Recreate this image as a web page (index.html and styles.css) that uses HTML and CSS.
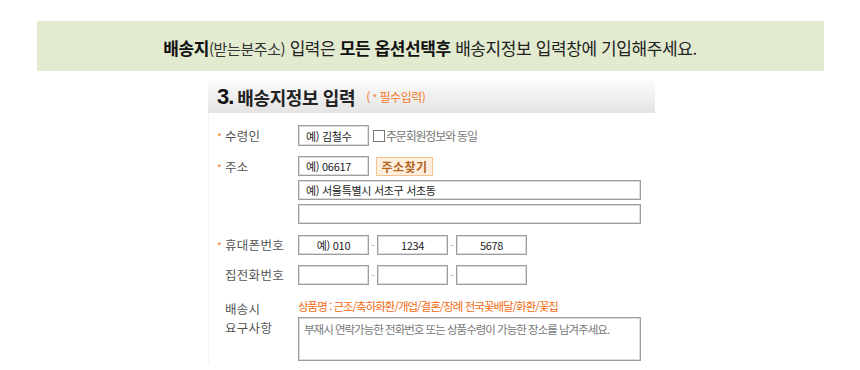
FILE: index.html
```html
<!DOCTYPE html>
<html lang="ko">
<head>
  <meta charset="UTF-8" />
  <title>배송지정보 입력</title>
  <link rel="stylesheet" href="styles.css">
</head>
<body>
  <div class="notice">
    <p><b>배송지</b><span class="small">(받는분주소)</span> 입력은 <b>모든 옵션선택후</b> 배송지정보 입력창에 기입해주세요.</p>
  </div>

  <div class="form">
    <div class="form-head">
      <span class="num">3.</span>
      <span class="title">배송지정보 입력</span>
      <span class="req">( <i>*</i> 필수입력)</span>
    </div>

    <div class="form-body">
      <div class="row r-name">
        <div class="label"><span class="star">*</span>수령인</div>
        <div class="field">
          <input type="text" class="box w71" value="예) 김철수" />
          <label class="same"><span class="check"></span>주문회원정보와 동일</label>
        </div>
      </div>

      <div class="row r-addr">
        <div class="label"><span class="star">*</span>주소</div>
        <div class="field col">
          <div class="line">
            <input type="text" class="box w71" value="예) 06617" />
            <button class="find">주소찾기</button>
          </div>
          <input type="text" class="box wide" value="예) 서울특별시 서초구 서초동" />
          <input type="text" class="box wide" value="" />
        </div>
      </div>

      <div class="row r-mobile">
        <div class="label"><span class="star">*</span>휴대폰번호</div>
        <div class="field">
          <input type="text" class="box tel" value="예) 010" />
          <span class="dash">-</span>
          <input type="text" class="box tel" value="1234" />
          <span class="dash">-</span>
          <input type="text" class="box tel" value="5678" />
        </div>
      </div>

      <div class="row r-home">
        <div class="label">집전화번호</div>
        <div class="field">
          <input type="text" class="box tel" value="" />
          <span class="dash">-</span>
          <input type="text" class="box tel" value="" />
          <span class="dash">-</span>
          <input type="text" class="box tel" value="" />
        </div>
      </div>

      <div class="row r-memo">
        <div class="label two">
          <span>배송시</span>
          <span>요구사항</span>
        </div>
        <div class="field col">
          <p class="hint">상품명 : 근조/축하화환/개업/결혼/장례 전국꽃배달/화환/꽃집</p>
          <textarea class="memo" placeholder="부재시 연락가능한 전화번호 또는 상품수령이 가능한 장소를 남겨주세요."></textarea>
        </div>
      </div>
    </div>
  </div>
</body>
</html>
```

FILE: styles.css
```css
* {
  box-sizing: border-box;
  margin: 0;
  padding: 0;
}

body {
  background: #fff;
  font-family: "Noto Sans CJK KR", "Noto Sans", sans-serif;
  color: #333;
}

/* top notice */
.notice {
  width: 787px;
  height: 50px;
  margin: 21px auto 0;
  background: #e2ebd0;
  display: flex;
  align-items: center;
  justify-content: center;
}

.notice p {
  font-size: 17px;
  letter-spacing: -0.4px;
  color: #222;
  padding-top: 2px;
}

.notice b {
  font-weight: 700;
  color: #111;
}

.notice .small {
  font-size: 15px;
  color: #333;
}

/* form */
.form {
  width: 447px;
  margin: 9px 0 0 208px;
}

.form-head {
  height: 33px;
  padding-left: 9px;
  display: flex;
  align-items: center;
  background: linear-gradient(#fbfbfb, #e4e4e4);
}

.form-head .num {
  font-family: "Liberation Sans", sans-serif;
  font-size: 22px;
  font-weight: 700;
  letter-spacing: -1px;
  color: #111;
  margin-right: 4px;
}

.form-head .title {
  font-size: 18px;
  font-weight: 700;
  letter-spacing: -0.4px;
  color: #222;
  margin-right: 11px;
}

.form-head .req {
  font-size: 12px;
  color: #f47a2a;
  letter-spacing: -0.5px;
}

.form-head .req i {
  font-style: normal;
  font-size: 10px;
}

.form-body {
  border-left: 1px solid #f3f3f3;
  padding: 12px 0 2px;
}

.row {
  display: flex;
}

.label {
  width: 89px;
  padding-left: 8px;
  font-size: 12.5px;
  color: #555;
  letter-spacing: 0.3px;
  height: 21px;
  line-height: 21px;
}

.label .star {
  display: inline-block;
  width: 8px;
  color: #f47a2a;
  font-size: 10px;
}

.label.two {
  padding-left: 16px;
  height: auto;
  padding-top: 1px;
  display: flex;
  flex-direction: column;
}

.label.two span {
  line-height: 19px;
}

.field {
  display: flex;
  align-items: center;
}

.field.col {
  flex-direction: column;
  align-items: flex-start;
  gap: 4px;
}

.line {
  display: flex;
  align-items: center;
  gap: 7px;
}

.box {
  height: 21px;
  border: 1px solid #9d9d9d;
  box-shadow: inset 0 0 0 1px #dcdcdc;
  background: #fff;
  font-family: inherit;
  font-size: 11px;
  color: #222;
  padding: 0 7px;
  letter-spacing: -0.3px;
  outline: none;
}

.w71 {
  width: 71px;
}

.wide {
  width: 343px;
  height: 20px;
}

.tel {
  width: 71px;
  height: 20px;
  text-align: center;
}

.dash {
  width: 8px;
  text-align: center;
  font-size: 11px;
  color: #aaa;
}

.same {
  display: flex;
  align-items: center;
  margin-left: 4px;
  font-size: 12px;
  color: #777;
  letter-spacing: -1.2px;
}

.check {
  width: 12px;
  height: 12px;
  border: 1px solid #777;
  background: #fff;
  margin-right: 1px;
}

.find {
  height: 19px;
  width: 57px;
  border: 1px solid #f3c48f;
  background: #fdeedd;
  color: #b5651d;
  font-family: inherit;
  font-size: 12px;
  font-weight: 700;
  letter-spacing: 0.5px;
}

.r-addr {
  margin-top: 10px;
}

.r-addr .line .box {
  height: 20px;
}

.r-mobile {
  margin-top: 11px;
}

.r-mobile .label,
.r-home .label {
  height: 20px;
  line-height: 20px;
}

.r-home {
  margin-top: 10px;
}

.r-home .label {
  padding-left: 16px;
}

.r-memo {
  margin-top: 13px;
}

.hint {
  font-size: 11.5px;
  color: #f26b12;
  letter-spacing: -1px;
  line-height: 14px;
  margin-top: 1px;
}

.memo {
  width: 343px;
  height: 44px;
  border: 1px solid #9d9d9d;
  box-shadow: inset 0 0 0 1px #dcdcdc;
  resize: none;
  font-family: inherit;
  font-size: 11.5px;
  letter-spacing: -1px;
  padding: 3px 5px;
  outline: none;
}

.memo::placeholder {
  color: #777;
}
```
